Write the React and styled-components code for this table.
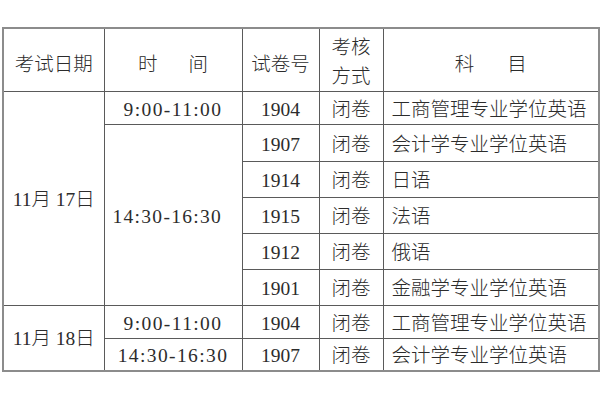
import React from "react";
import styled, { createGlobalStyle } from "styled-components";

const GlobalStyle = createGlobalStyle`
  html, body {
    margin: 0;
    padding: 0;
    background: #ffffff;
  }
  body {
    font-family: "Liberation Serif", "Noto Sans CJK SC", serif;
    color: #333333;
  }
`;

const Page = styled.div`
  width: 600px;
  height: 400px;
  padding: 27px 0 0 2px;
  box-sizing: border-box;
  background: #ffffff;
`;

const Table = styled.table`
  width: 596px;
  table-layout: fixed;
  border-collapse: collapse;
  border: 2.5px solid #8c8c8c;
  font-size: 19.5px;
  font-weight: 300;
  color: #2c2c2c;
`;

const Col = styled.col`
  width: ${(p) => p.$w}px;
`;

const Row = styled.tr`
  height: ${(p) => p.$h}px;
`;

const HeadCell = styled.th`
  border: 1.5px solid #5a5a5a;
  font-weight: 300;
  text-align: center;
  vertical-align: middle;
  padding: ${(p) => (p.$stack ? "4px 0 0" : "9px 0 0")};
  line-height: ${(p) => (p.$stack ? "29px" : "22px")};
  white-space: nowrap;
`;

const Cell = styled.td`
  border: 1.5px solid #5a5a5a;
  text-align: ${(p) => p.$align || "center"};
  vertical-align: middle;
  padding: ${(p) => (p.$align === "left" ? "3px 0 0 8px" : "3px 0 0")};
  line-height: 22px;
  white-space: nowrap;
  letter-spacing: ${(p) => p.$track || 0}px;
`;

const Spaced = styled.span`
  letter-spacing: ${(p) => p.$gap}px;
  margin-right: -${(p) => p.$gap}px;
`;

const rows17 = [
  { time: "9:00-11:00", code: "1904", subject: "工商管理专业学位英语" },
  { code: "1907", subject: "会计学专业学位英语", h: 37 },
  { code: "1914", subject: "日语", h: 36 },
  { code: "1915", subject: "法语", h: 36 },
  { code: "1912", subject: "俄语", h: 36 },
  { code: "1901", subject: "金融学专业学位英语", h: 36 },
];

const rows18 = [
  { time: "9:00-11:00", code: "1904", subject: "工商管理专业学位英语", h: 33 },
  { time: "14:30-16:30", code: "1907", subject: "会计学专业学位英语", h: 32 },
];

export default function App() {
  return (
    <Page>
      <GlobalStyle />
      <Table>
        <colgroup>
          <Col $w={101} />
          <Col $w={138} />
          <Col $w={77} />
          <Col $w={64} />
          <Col $w={216} />
        </colgroup>
        <tbody>
          <Row $h={63}>
            <HeadCell>考试日期</HeadCell>
            <HeadCell>
              <Spaced $gap={31}>时间</Spaced>
            </HeadCell>
            <HeadCell>试卷号</HeadCell>
            <HeadCell $stack>
              考核
              <br />
              方式
            </HeadCell>
            <HeadCell>
              <Spaced $gap={33}>科目</Spaced>
            </HeadCell>
          </Row>

          <Row $h={33}>
            <Cell rowSpan={6}>11月 17日</Cell>
            <Cell $track={1.4}>{rows17[0].time}</Cell>
            <Cell>{rows17[0].code}</Cell>
            <Cell>闭卷</Cell>
            <Cell $align="left">{rows17[0].subject}</Cell>
          </Row>
          {rows17.slice(1).map((r, i) => (
            <Row key={r.code} $h={r.h}>
              {i === 0 && (
                <Cell rowSpan={5} $align="left" $track={1.3}>
                  14:30-16:30
                </Cell>
              )}
              <Cell>{r.code}</Cell>
              <Cell>闭卷</Cell>
              <Cell $align="left">{r.subject}</Cell>
            </Row>
          ))}

          {rows18.map((r, i) => (
            <Row key={r.time} $h={r.h}>
              {i === 0 && <Cell rowSpan={2}>11月 18日</Cell>}
              <Cell $track={1.4}>{r.time}</Cell>
              <Cell>{r.code}</Cell>
              <Cell>闭卷</Cell>
              <Cell $align="left">{r.subject}</Cell>
            </Row>
          ))}
        </tbody>
      </Table>
    </Page>
  );
}
